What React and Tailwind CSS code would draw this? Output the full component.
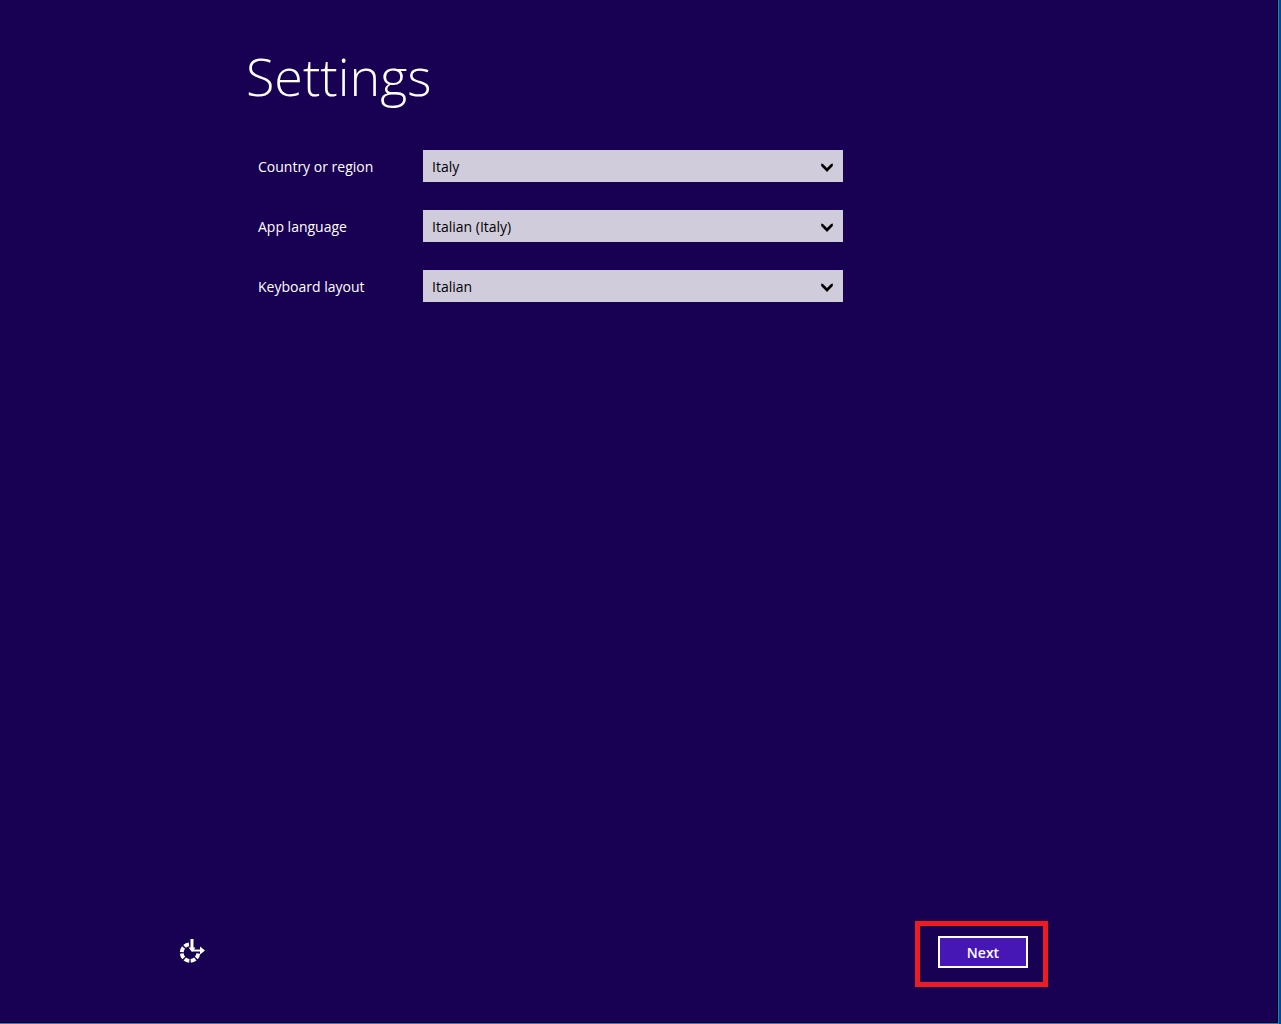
import { useState } from "react";

const FIELDS = [
  {
    id: "country",
    label: "Country or region",
    options: ["Italy", "France", "Germany", "United States"],
  },
  {
    id: "language",
    label: "App language",
    options: ["Italian (Italy)", "English (United States)"],
  },
  {
    id: "keyboard",
    label: "Keyboard layout",
    options: ["Italian", "US"],
  },
];

const Chevron = () => (
  <svg
    className="absolute right-2 top-3 w-4 h-3 pointer-events-none"
    viewBox="0 0 16 12"
    fill="#000"
    aria-hidden="true"
  >
    <path d="M2.2 1.4 L4 2 L8 6 L12 2 L13.8 1.4 L13.8 4 L8 10 L2.2 4 Z" />
  </svg>
);

const EaseOfAccessIcon = () => (
  <svg className="w-7 h-7" viewBox="0 0 28 28" fill="none" aria-hidden="true">
    <path
      d="M11 7.4 A8.3 8.3 0 1 0 20.3 16.4"
      stroke="#fff"
      strokeWidth="3.8"
      strokeDasharray="5 1.4"
    />
    <path d="M14 2 V13" stroke="#fff" strokeWidth="3" />
    <path d="M10.5 10.5 H17.5 L14 15 Z" fill="#fff" />
    <path d="M14 13.5 H24" stroke="#fff" strokeWidth="2" />
    <path d="M22 9.5 L27 13.5 L22 17.5 Z" fill="#fff" />
  </svg>
);

const SettingsField = ({ field, value, onChange }) => (
  <div className="flex items-center">
    <label htmlFor={field.id} className="w-[165px] shrink-0 pt-[2px] text-white">
      {field.label}
    </label>
    <div className="relative flex-1 max-w-[420px]">
      <select
        id={field.id}
        value={value}
        onChange={(e) => onChange(field.id, e.target.value)}
        className="block w-full h-8 pt-[2px] pl-[9px] pr-8 appearance-none rounded-none bg-[#d1ccdc] text-black"
      >
        {field.options.map((opt) => (
          <option key={opt}>{opt}</option>
        ))}
      </select>
      <Chevron />
    </div>
  </div>
);

const App = () => {
  const [values, setValues] = useState({
    country: "Italy",
    language: "Italian (Italy)",
    keyboard: "Italian",
  });

  const handleChange = (id, value) =>
    setValues((prev) => ({ ...prev, [id]: value }));

  return (
    <div className="min-h-screen flex flex-col bg-[#04468c] pr-[2px] font-['Open_Sans',sans-serif] text-sm">
      <div className="flex-1 flex flex-col border-r border-b border-[#1883d7]">
        <div className="flex-1 flex flex-col border-r border-b border-black bg-[#180052]">
          <main className="flex-1 pl-[246px] pr-8 pt-10">
            <h1 className="text-[52px] leading-[72px] font-light text-white">
              Settings
            </h1>
            <form className="mt-[38px] pl-3 space-y-7">
              {FIELDS.map((field) => (
                <SettingsField
                  key={field.id}
                  field={field}
                  value={values[field.id]}
                  onChange={handleChange}
                />
              ))}
            </form>
          </main>

          <footer className="flex items-end justify-between pl-[178px] pr-[229px] pb-[35px]">
            <button type="button" aria-label="Ease of access" className="mb-[22px]">
              <EaseOfAccessIcon />
            </button>
            <div className="border-5 border-[#ed1c24] pt-[10px] pb-[14px] pl-[18px] pr-[15px]">
              <button
                type="button"
                className="block w-[90px] h-8 pt-[2px] border-2 border-white bg-[#4617b4] text-white font-semibold"
              >
                Next
              </button>
            </div>
          </footer>
        </div>
      </div>
    </div>
  );
};

export default App;
